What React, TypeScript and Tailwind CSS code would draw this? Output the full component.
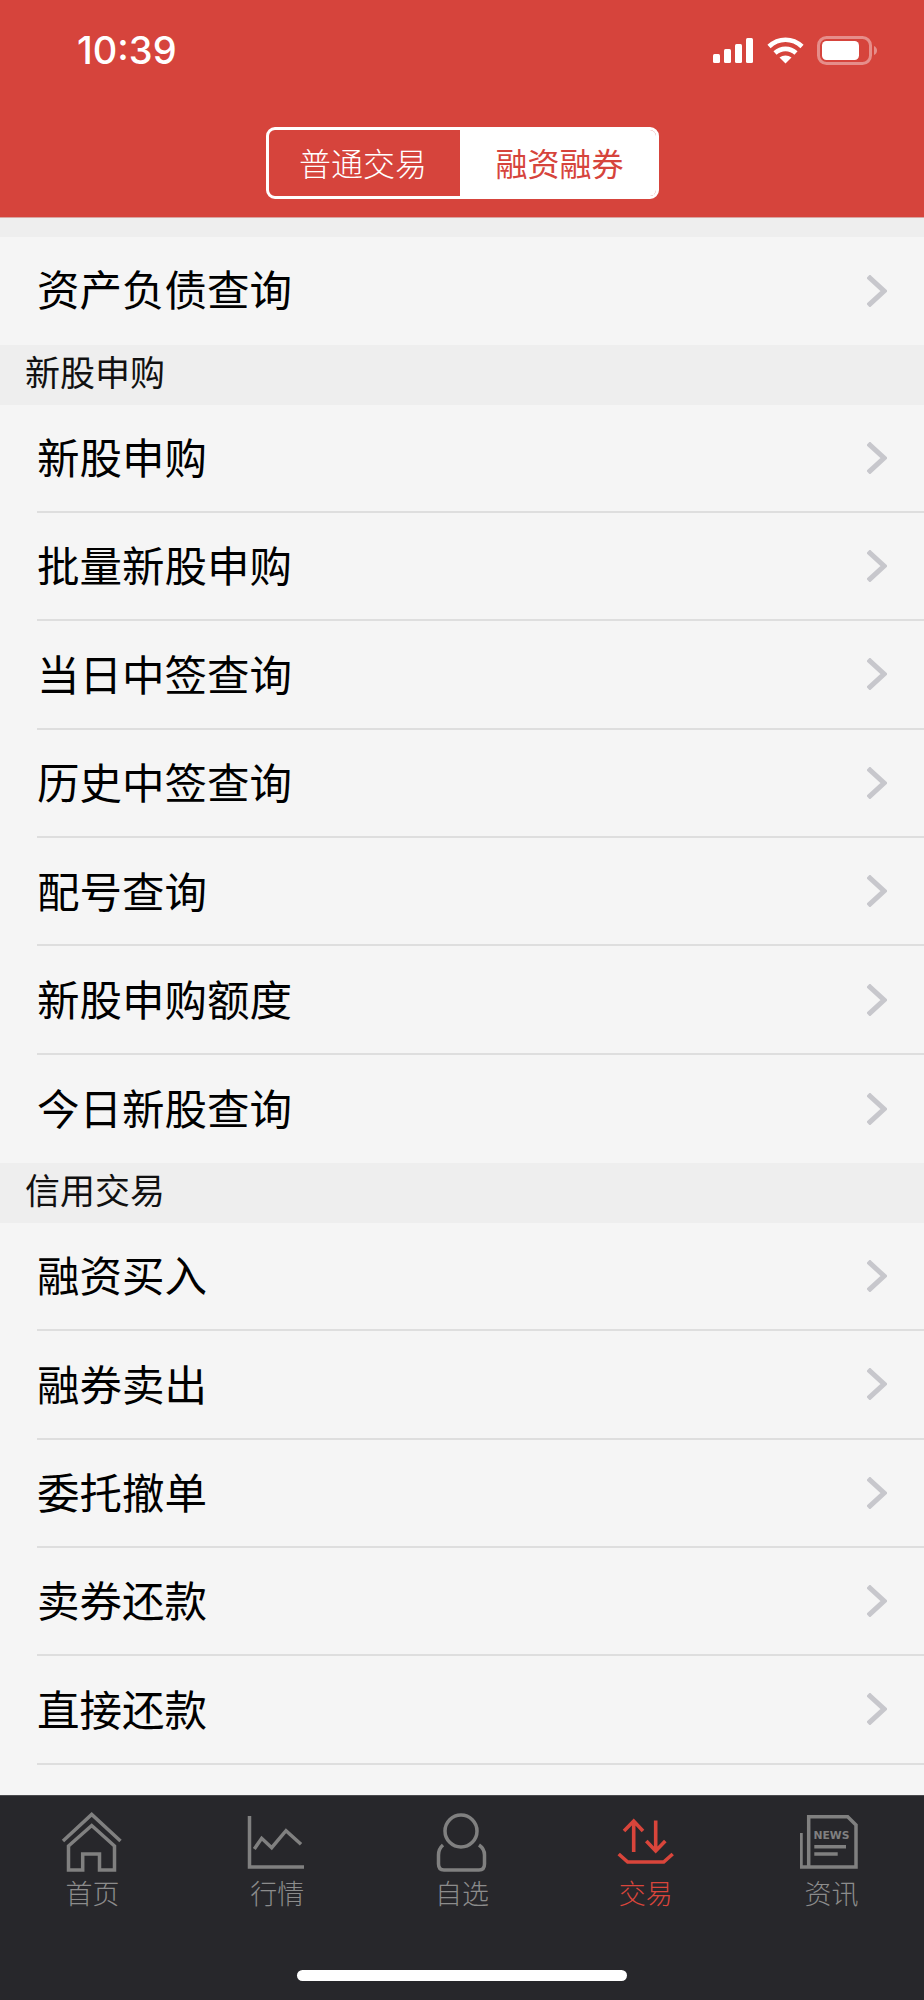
const FONT = "font-['PingFang_SC','Noto_Sans_CJK_SC','Noto_Sans',sans-serif]";

const sections = [
  { title: null, items: ["资产负债查询"] },
  {
    title: "新股申购",
    items: ["新股申购", "批量新股申购", "当日中签查询", "历史中签查询", "配号查询", "新股申购额度", "今日新股查询"],
  },
  { title: "信用交易", items: ["融资买入", "融券卖出", "委托撤单", "卖券还款", "直接还款"] },
];

function StatusIcons() {
  return (
    <div className="flex items-center gap-[13px]">
      <svg width="41" height="25" viewBox="0 0 41 25" fill="#fff">
        <rect x="0" y="16" width="7" height="9" rx="1.5" />
        <rect x="11" y="11" width="7" height="14" rx="1.5" />
        <rect x="22" y="6" width="7" height="19" rx="1.5" />
        <rect x="33" y="0" width="7" height="25" rx="1.5" />
      </svg>
      <svg width="37" height="27" viewBox="0 0 37 27" fill="none" stroke="#fff" strokeWidth="4.6">
        <path d="M2 9.5C11.5 0.5 25.5 0.5 35 9.5" />
        <path d="M8 16C14 10.5 23 10.5 29 16" />
        <path d="M18.5 26.5L12.5 20.6C16 17.8 21 17.8 24.5 20.6Z" fill="#fff" stroke="none" />
      </svg>
      <svg width="60" height="29" viewBox="0 0 60 29" fill="none">
        <rect x="1.5" y="1.5" width="52" height="26" rx="8" stroke="#fff" strokeOpacity="0.4" strokeWidth="3" />
        <rect x="5" y="5" width="37" height="19" rx="4.5" fill="#fff" />
        <path d="M57 10C59 11 60 12.5 60 14.5C60 16.5 59 18 57 19Z" fill="#fff" fillOpacity="0.4" />
      </svg>
    </div>
  );
}

function Header() {
  return (
    <header className="h-[218px] shrink-0 border-b border-[#d9a6a2] bg-[#d6443c]">
      <div className="flex h-[100px] items-center justify-between pl-[77px] pr-[47px]">
        <span className="font-['Inter',sans-serif] text-[38px] font-medium leading-none text-white">10:39</span>
        <StatusIcons />
      </div>
      <div className="mt-[27px] flex justify-center">
        <div className="flex h-[72px] w-[393px] overflow-hidden rounded-[9px] border-[3px] border-white text-[32px]">
          <div className="flex w-[191px] items-center justify-center pb-[3px] pr-[2px] font-light text-white">普通交易</div>
          <div className="flex flex-1 items-center justify-center bg-white pb-[3px] pl-[4px] text-[#d6443c]">融资融券</div>
        </div>
      </div>
    </header>
  );
}

function Chevron() {
  return (
    <svg width="20" height="32" viewBox="0 0 20 32" fill="none" stroke="#c7c7cc" strokeWidth="5" strokeLinecap="square">
      <path d="M3 3L17 16L3 29" />
    </svg>
  );
}

function Row({ label, divider, first }: { label: string; divider: boolean; first: boolean }) {
  return (
    <div className={`bg-[#f5f5f5] pl-[37px] ${first ? "h-[108px]" : "h-[108.4px]"}`}>
      <div className={`flex h-full items-center justify-between pr-[37px] ${divider ? "border-b-2 border-[#dedede]" : ""}`}>
        <span className={`text-[42.5px] leading-none text-black ${first ? "pb-[5px]" : "pb-[3px]"}`}>{label}</span>
        <Chevron />
      </div>
    </div>
  );
}

const tabStroke = { fill: "none", stroke: "#808080", strokeWidth: 3.5 };

const tabs = [
  {
    label: "首页",
    icon: (
      <g {...tabStroke}>
        <path d="M3 31L31.7 4.5L60.5 31" />
        <path d="M8.5 60V36L31.7 15.5L54.5 36V60H39.5V44H22.7V60Z" />
      </g>
    ),
  },
  {
    label: "行情",
    icon: (
      <g {...tabStroke}>
        <path d="M4.5 6V57H59" />
        <path d="M9.3 39L16.7 28.3L26.7 37.7L41 20.7L56 34.3" />
      </g>
    ),
  },
  {
    label: "自选",
    icon: (
      <g {...tabStroke}>
        <circle cx="31" cy="21" r="16" />
        <path d="M13 35C9.5 38 8.5 41 8.5 45V54Q8.5 60 14 60H49Q54.5 60 54.5 54V45C54.5 41 53.5 38 49 35" />
      </g>
    ),
  },
  {
    label: "交易",
    active: true,
    icon: (
      <g fill="none" stroke="#d9453b" strokeWidth="3.6" transform="translate(-2 0)">
        <path d="M20.7 42V11M11 21L20.7 11L30 21" />
        <path d="M42.7 10.5V41M33.3 31L42.7 41L52.3 31" />
        <path d="M5.7 44L14.7 52H50.7L59.7 44" />
      </g>
    ),
  },
  {
    label: "资讯",
    icon: (
      <g transform="translate(-3 0)">
        <g {...tabStroke}>
          <path d="M4 23V57H59V15L50.7 6.7H11.7V57" />
          <path d="M17.3 36.7H49M17.3 44H40.7" />
        </g>
        <text x="16.5" y="29" fontFamily="'DejaVu Sans',sans-serif" fontSize="10" fontWeight="700" fill="#808080" textLength="36" lengthAdjust="spacingAndGlyphs">
          NEWS
        </text>
      </g>
    ),
  },
];

function TabBar() {
  return (
    <nav className="h-[205px] shrink-0 border-t border-[#4a4a4d] bg-[#27272b]">
      <div className="grid grid-cols-5 pt-[14px]">
        {tabs.map((t) => (
          <div key={t.label} className="flex flex-col items-center">
            <svg width="64" height="64" viewBox="0 0 64 64">
              {t.icon}
            </svg>
            <span className={`mt-[4px] text-[27px] font-light leading-[30px] ${t.active ? "-translate-x-[1px] text-[#d9453b]" : "text-[#8c8c8c]"}`}>{t.label}</span>
          </div>
        ))}
      </div>
      <div className="mt-[62px] flex justify-center">
        <div className="h-[11px] w-[330px] rounded-full bg-white" />
      </div>
    </nav>
  );
}

export default function App() {
  return (
    <div className={`flex h-[2000px] w-[924px] flex-col overflow-hidden bg-[#f5f5f5] ${FONT}`}>
      <Header />
      <main className="min-h-0 flex-1">
        {sections.map((s, i) => (
          <section key={i}>
            {s.title ? (
              <div className="flex h-[59.5px] items-center bg-[#eeeeee] pb-[8px] pl-[25px] text-[35px] leading-none text-[#111]">{s.title}</div>
            ) : (
              <div className="h-[19px] bg-[#eeeeee]" />
            )}
            {s.items.map((label, j) => (
              <Row
                key={label}
                label={label}
                first={s.title === null}
                divider={s.title !== null && (j < s.items.length - 1 || i === sections.length - 1)}
              />
            ))}
          </section>
        ))}
      </main>
      <TabBar />
    </div>
  );
}
